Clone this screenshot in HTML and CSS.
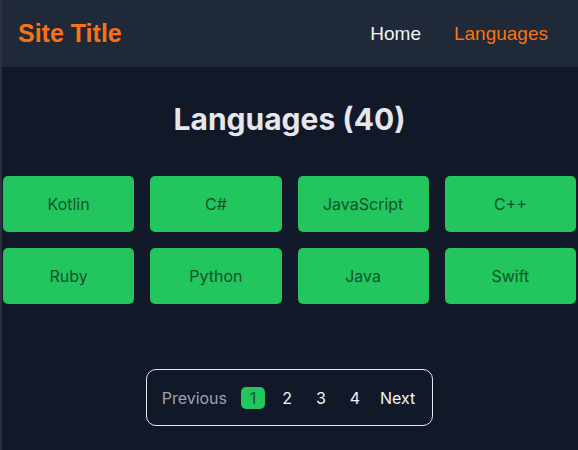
FILE: index.html
```html
<!DOCTYPE html>
<html>
<head>
<meta charset="utf-8">
<link rel="stylesheet" href="styles.css">
</head>
<body>
<header class="topbar">
  <div class="brand">Site Title</div>
  <nav class="nav">
    <a class="nav-link">Home</a>
    <a class="nav-link active">Languages</a>
  </nav>
</header>
<main class="content">
  <h1 class="heading">Languages (40)</h1>
  <div class="grid">
    <div class="card">Kotlin</div>
    <div class="card">C#</div>
    <div class="card">JavaScript</div>
    <div class="card">C++</div>
    <div class="card">Ruby</div>
    <div class="card">Python</div>
    <div class="card">Java</div>
    <div class="card">Swift</div>
  </div>
  <div class="pager-wrap">
    <div class="pager">
      <span class="pg prev">Previous</span>
      <span class="pg num current">1</span>
      <span class="pg num">2</span>
      <span class="pg num">3</span>
      <span class="pg num">4</span>
      <span class="pg next">Next</span>
    </div>
  </div>
</main>
</body>
</html>
```
FILE: styles.css
```css
html, body {
  margin: 0;
  padding: 0;
  background: #111827;
  height: 100%;
}
body {
  font-family: Inter, "Liberation Sans", sans-serif;
  border-left: 2px solid #2a3142;
  box-sizing: border-box;
  overflow: hidden;
}
.topbar {
  height: 67px;
  background: #1f2937;
  display: flex;
  align-items: center;
  justify-content: space-between;
  padding: 0 30px 0 16px;
}
.brand {
  font-family: "Liberation Sans", Arial, sans-serif;
  font-weight: bold;
  font-size: 25px;
  color: #f97316;
}
.nav {
  display: flex;
  gap: 33px;
  font-family: "Liberation Sans", Arial, sans-serif;
  font-size: 19px;
}
.nav-link {
  color: #f3f4f6;
}
.nav-link.active {
  color: #f97316;
}
.content {
  padding: 0 2px 0 1px;
}
.heading {
  margin: 0;
  padding-top: 34px;
  height: 75px;
  box-sizing: border-box;
  text-align: center;
  font-size: 30px;
  font-weight: 700;
  color: #e5e7eb;
}
.grid {
  margin-top: 34px;
  display: grid;
  grid-template-columns: repeat(4, 1fr);
  gap: 16px 16px;
}
.card {
  height: 56px;
  background: #22c55e;
  border-radius: 5px;
  display: flex;
  align-items: center;
  justify-content: center;
  color: #14532d;
  font-size: 16px;
}
.pager-wrap {
  display: flex;
  justify-content: center;
  margin-top: 65px;
}
.pager {
  display: flex;
  align-items: center;
  border: 1px solid #e5e7eb;
  border-radius: 10px;
  height: 57px;
  padding: 0 17px 0 15px;
  box-sizing: border-box;
  font-size: 16px;
  color: #f3f4f6;
}
.pg.prev {
  color: #9ca3af;
  margin-right: 14px;
}
.pg.num {
  width: 24px;
  height: 22px;
  display: flex;
  align-items: center;
  justify-content: center;
  margin-right: 10px;
}
.pg.current {
  background: #22c55e;
  color: #14532d;
  border-radius: 5px;
}
.pg.next {
  margin-left: 3px;
}
```
